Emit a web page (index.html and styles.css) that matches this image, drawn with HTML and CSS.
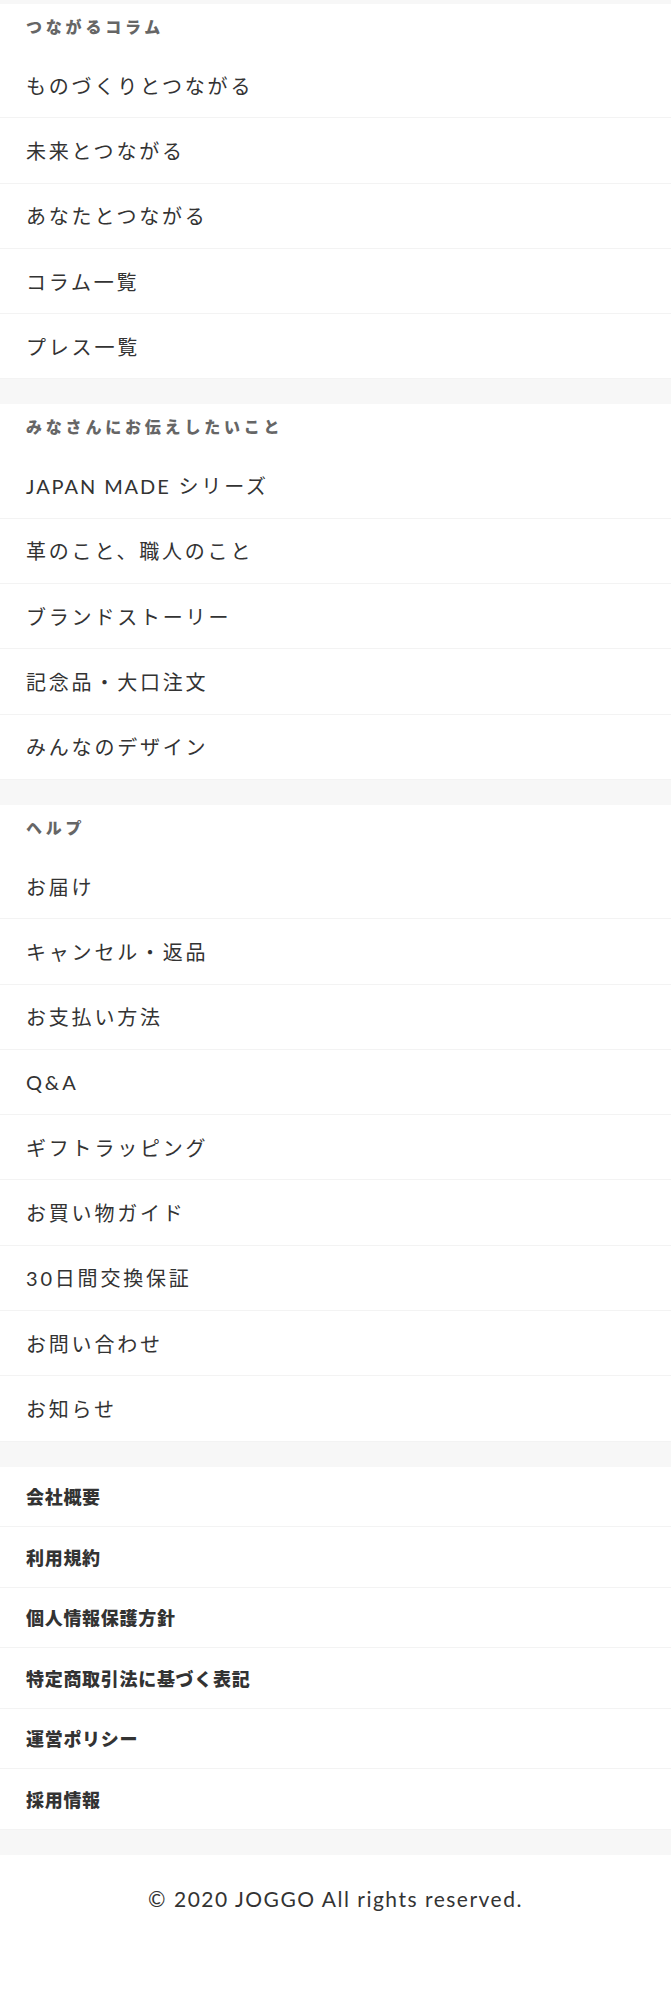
FILE: index.html
```html
<!DOCTYPE html>
<html lang="ja">
  <head>
    <meta charset="UTF-8" />
    <meta name="viewport" content="width=device-width, initial-scale=1.0" />
    <title>JOGGO</title>
    <link rel="stylesheet" href="styles.css">
  </head>
  <body>
    <div class="footerNav">
      <div class="navBlock">
        <p class="navTitle">つながるコラム</p>
        <ul class="navList">
          <li><a href="#">ものづくりとつながる</a></li>
          <li><a href="#">未来とつながる</a></li>
          <li><a href="#">あなたとつながる</a></li>
          <li><a href="#">コラム一覧</a></li>
          <li><a href="#">プレス一覧</a></li>
        </ul>
      </div>
      <div class="navBlock">
        <p class="navTitle">みなさんにお伝えしたいこと</p>
        <ul class="navList">
          <li><a href="#"><span class="en">JAPAN MADE</span>&nbsp;シリーズ</a></li>
          <li><a href="#">革のこと、職人のこと</a></li>
          <li><a href="#">ブランドストーリー</a></li>
          <li><a href="#">記念品・大口注文</a></li>
          <li><a href="#">みんなのデザイン</a></li>
        </ul>
      </div>
      <div class="navBlock">
        <p class="navTitle">ヘルプ</p>
        <ul class="navList">
          <li><a href="#">お届け</a></li>
          <li><a href="#">キャンセル・返品</a></li>
          <li><a href="#">お支払い方法</a></li>
          <li><a href="#">Q&amp;A</a></li>
          <li><a href="#">ギフトラッピング</a></li>
          <li><a href="#">お買い物ガイド</a></li>
          <li><a href="#">30日間交換保証</a></li>
          <li><a href="#">お問い合わせ</a></li>
          <li><a href="#">お知らせ</a></li>
        </ul>
      </div>
      <div class="navBlock">
        <ul class="navList navList_small">
          <li><a href="#">会社概要</a></li>
          <li><a href="#">利用規約</a></li>
          <li><a href="#">個人情報保護方針</a></li>
          <li><a href="#">特定商取引法に基づく表記</a></li>
          <li><a href="#">運営ポリシー</a></li>
          <li><a href="#">採用情報</a></li>
        </ul>
      </div>
    </div>
    <footer class="copyright">© 2020 JOGGO All rights reserved.</footer>
  </body>
</html>
```

FILE: styles.css
```css
* {
  box-sizing: border-box;
}

body {
  margin: 0;
  background: #fff;
  color: #333;
  font-family: Lato, "Noto Sans CJK JP", sans-serif;
}

.footerNav {
  border-top: 4px solid #f7f7f7;
}

.navBlock {
  border-bottom: 25px solid #f7f7f7;
}

.navTitle {
  margin: 0;
  padding: 13px 26px 16px;
  line-height: 20px;
  font-size: 16px;
  font-weight: 900;
  letter-spacing: 3.8px;
  color: #666;
}

.navList {
  list-style: none;
  margin: 0;
  padding: 0;
}

.navList li {
  border-bottom: 1px solid #f3f3f3;
}

.navList a {
  display: flex;
  align-items: center;
  height: 64.3px;
  padding: 0 26px;
  font-size: 20px;
  letter-spacing: 2.8px;
  color: #333;
  text-decoration: none;
  white-space: pre;
}

.navList .en {
  letter-spacing: 1.9px;
}

.navList_small a {
  height: 59.5px;
  font-size: 18px;
  font-weight: 900;
  letter-spacing: 0.7px;
}

.copyright {
  padding: 29px 0 80px;
  line-height: 30px;
  text-align: center;
  font-size: 21px;
  letter-spacing: 1.5px;
  color: #333;
}
```
